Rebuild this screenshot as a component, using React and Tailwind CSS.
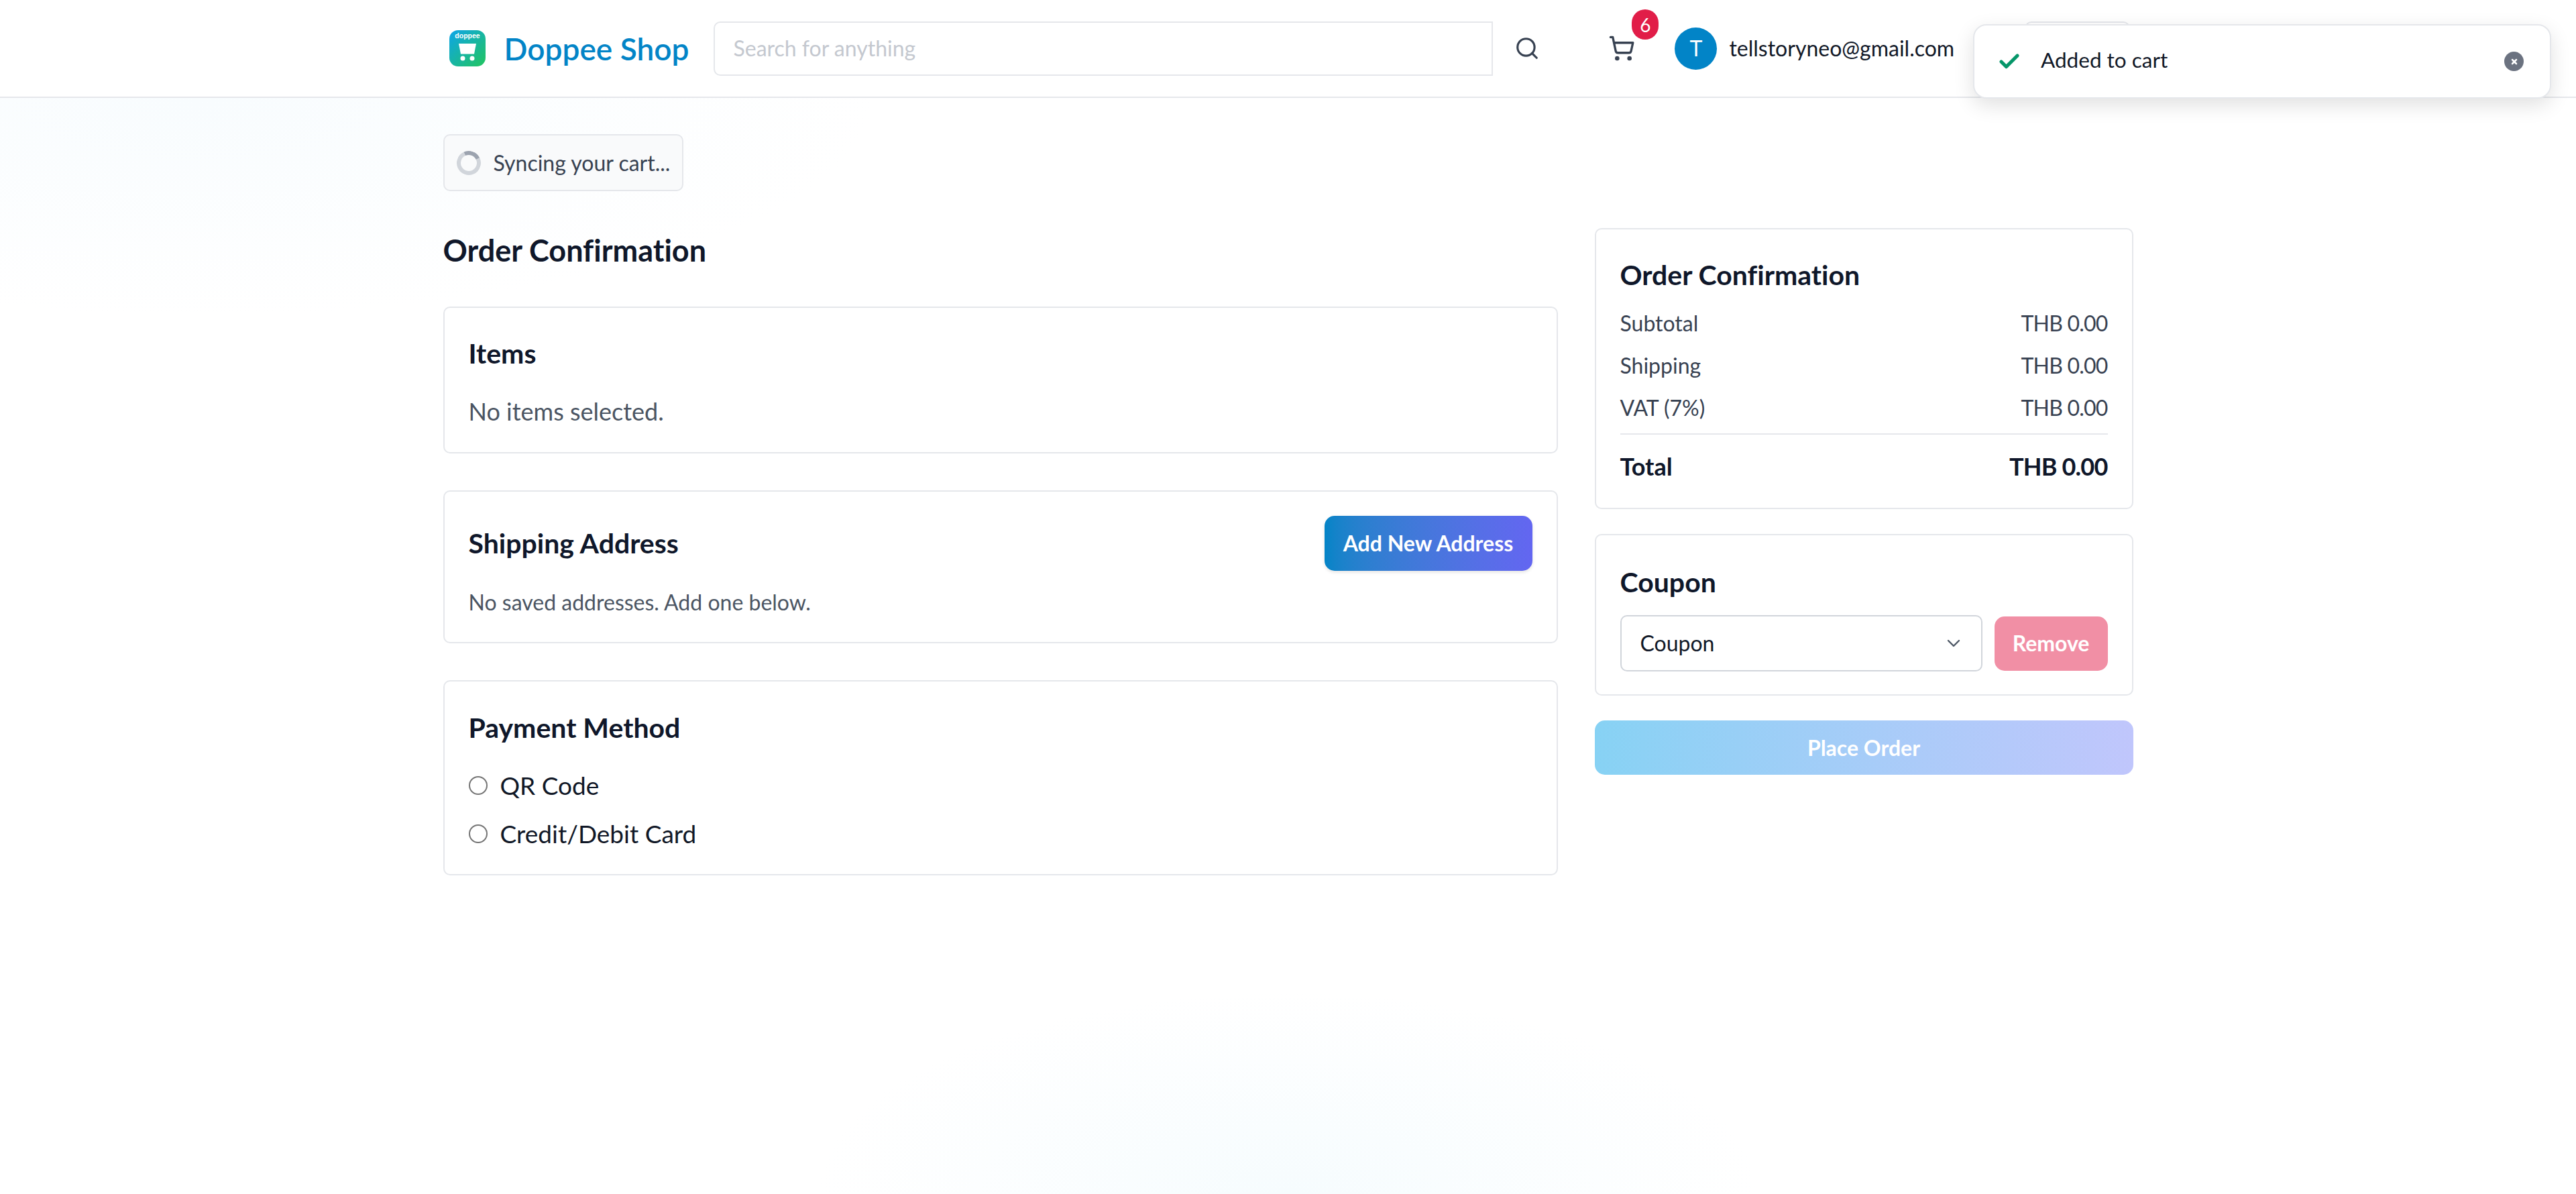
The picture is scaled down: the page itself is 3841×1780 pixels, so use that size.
import React from 'react';
import { Search, ShoppingCart, Check, X, ChevronDown } from 'lucide-react';

const Card = ({ className = '', children }) => (
  <div className={`rounded-[10px] border-2 border-[#e5e7eb] bg-white p-[36px] ${className}`}>{children}</div>
);

const Logo = () => (
  <svg viewBox="0 0 54 54" className="h-[54px] w-[54px] shrink-0">
    <defs>
      <linearGradient id="logoGrad" x1="0" y1="0" x2="1" y2="1">
        <stop offset="0" stopColor="#0ea5e9" />
        <stop offset="1" stopColor="#22c55e" />
      </linearGradient>
    </defs>
    <rect width="54" height="54" rx="13" fill="url(#logoGrad)" />
    <text x="27" y="11.500" textAnchor="middle" fontSize="10.500" fontWeight="700" fill="#fff" fontFamily="Liberation Sans, sans-serif">doppee</text>
    <path d="M14 20h26l-3 15.500H17z" fill="#fff" />
    <circle cx="20" cy="42" r="3.500" fill="#fff" />
    <circle cx="34" cy="42" r="3.500" fill="#fff" />
  </svg>
);

const SummaryRow = ({ label }) => (
  <div className="flex h-[63px] items-center justify-between text-[32px] text-[#374151]">
    <span>{label}</span>
    <span className="tracking-[-0.8px]">THB 0.00</span>
  </div>
);

const Radio = ({ label }) => (
  <label className="flex h-[72px] items-center gap-[19px] text-[37px] text-[#111827]">
    <input type="radio" name="payment" className="m-0 h-[28px] w-[28px] appearance-none rounded-full border-2 border-[#767676] bg-white" />
    <span>{label}</span>
  </label>
);

export default function App() {
  return (
    <div className="relative min-h-screen overflow-hidden bg-white bg-[radial-gradient(ellipse_1000px_320px_at_300px_150px,#f8fcfe,transparent),radial-gradient(ellipse_700px_300px_at_1920px_1780px,#f6fcfe,transparent)] font-['Lato',sans-serif] text-[#0f172a] [font-variant-ligatures:none]">
      <header className="h-[146px] border-b-2 border-[#e5e7eb] bg-white">
        <div className="mx-auto flex h-full w-[2520px] items-center pl-[9px]">
          <Logo />
          <span className="ml-[28px] whitespace-nowrap text-[46px] font-semibold text-[#0284c7]">Doppee Shop</span>
          <div className="ml-[37px] flex h-[81px] w-[1162px] shrink-0 items-center rounded-l-[10px] border-2 border-[#e5e7eb] px-[27px] text-[32px] text-[#c4c8cf]">
            Search for anything
          </div>
          <Search className="ml-[32px] h-[38px] w-[38px] shrink-0 text-[#374151]" strokeWidth={2} />
          <div className="relative ml-[102px] h-[40px] w-[40px] shrink-0">
            <ShoppingCart className="h-[40px] w-[40px] text-[#374151]" strokeWidth={2} />
            <span className="absolute left-[35px] top-[-38px] flex h-[45px] w-[40px] items-center justify-center rounded-full bg-[#e11d48] text-[28px] text-white">6</span>
          </div>
          <div className="ml-[59px] flex h-[63px] w-[63px] shrink-0 items-center justify-center rounded-full bg-[#0284c7] text-[32px] text-white">T</div>
          <span className="ml-[18px] w-[338px] whitespace-nowrap text-[32px] text-[#111827]">tellstoryneo@gmail.com</span>
          <div className="ml-[103px] h-[81px] w-[157px] shrink-0 rounded-[10px] border-2 border-[#e5e7eb]"></div>
        </div>
      </header>

      <div className="absolute left-[2942px] top-[36px] flex h-[111px] w-[862px] items-center rounded-[20px] border-2 border-[#e5e7eb] bg-white pl-[34px] pr-[39px] shadow-[0_10px_30px_rgba(0,0,0,0.12)]">
        <Check className="h-[36px] w-[36px] text-[#059669]" strokeWidth={3.500} />
        <span className="ml-[29px] flex-1 pb-[4px] text-[31.500px] text-[#111827]">Added to cart</span>
        <span className="flex h-[29px] w-[29px] items-center justify-center rounded-full bg-[#6b7280]">
          <X className="h-[12px] w-[12px] text-white" strokeWidth={5} />
        </span>
      </div>

      <main className="mx-auto w-[2520px] pt-[54px]">
        <div className="inline-flex h-[85px] items-center rounded-[10px] border-2 border-[#e5e7eb] bg-[#f9fafb] pl-[18px] pr-[18px] text-[32px] text-[#374151]">
          <span className="h-[36px] w-[36px] rotate-[20deg] rounded-full border-[6px] border-[#d1d5db] border-t-[#9ca3af]"></span>
          <span className="ml-[19px]">Syncing your cart...</span>
        </div>

        <div className="mt-[55px] flex items-start gap-[55px]">
          <div className="flex w-[1662px] flex-col gap-[55px]">
            <h1 className="flex h-[62px] items-center pt-[5px] text-[45px] font-bold leading-none">Order Confirmation</h1>
            <Card className="h-[219px]">
              <h2 className="mt-[2px] text-[41px] font-bold leading-[60px]">Items</h2>
              <p className="mt-[31px] text-[36px] leading-[50px] text-[#4b5563]">No items selected.</p>
            </Card>
            <Card className="h-[228px]">
              <div className="flex items-center justify-between">
                <h2 className="text-[41px] font-bold">Shipping Address</h2>
                <button className="flex h-[82px] w-[310px] items-center justify-center rounded-[15px] bg-gradient-to-r from-[#0284c7] to-[#6366f1] text-[32px] font-bold text-white shadow-[0_2px_5px_rgba(0,0,0,0.12)]">Add New Address</button>
              </div>
              <p className="mt-[23px] text-[32px] text-[#4b5563]">No saved addresses. Add one below.</p>
            </Card>
            <Card className="h-[291px]">
              <h2 className="mt-[3px] text-[41px] font-bold leading-[60px]">Payment Method</h2>
              <div className="mt-[20px]">
                <Radio label="QR Code" />
                <Radio label="Credit/Debit Card" />
              </div>
            </Card>
          </div>

          <div className="flex w-[803px] flex-col gap-[37px]">
            <Card className="h-[419px] pt-[38px]">
              <h2 className="text-[41px] font-bold leading-[60px]">Order Confirmation</h2>
              <div className="mt-[10px]">
                <SummaryRow label="Subtotal" />
                <SummaryRow label="Shipping" />
                <SummaryRow label="VAT (7%)" />
              </div>
              <div className="mt-[7px] flex items-center justify-between border-t-2 border-[#e5e7eb] pt-[20px] text-[36px] font-bold">
                <span>Total</span>
                <span className="tracking-[-0.8px]">THB 0.00</span>
              </div>
            </Card>
            <Card className="h-[241px] pt-[40px]">
              <h2 className="text-[41px] font-bold leading-[60px]">Coupon</h2>
              <div className="mt-[19px] flex items-center gap-[18px]">
                <div className="flex h-[84px] flex-1 items-center justify-between rounded-[10px] border-2 border-[#d1d5db] pl-[28px] pr-[25px] text-[32px] text-[#111827]">
                  <span>Coupon</span>
                  <ChevronDown className="h-[32px] w-[32px] text-[#4b5563]" strokeWidth={1.800} />
                </div>
                <button className="h-[81px] w-[169px] rounded-[15px] bg-[#f18fa5] text-[32px] font-bold text-white">Remove</button>
              </div>
            </Card>
            <button className="h-[81px] w-full rounded-[15px] bg-gradient-to-r from-[#87d2f4] to-[#c0c6fc] text-[32px] font-bold text-white">Place Order</button>
          </div>
        </div>
      </main>
    </div>
  );
}
